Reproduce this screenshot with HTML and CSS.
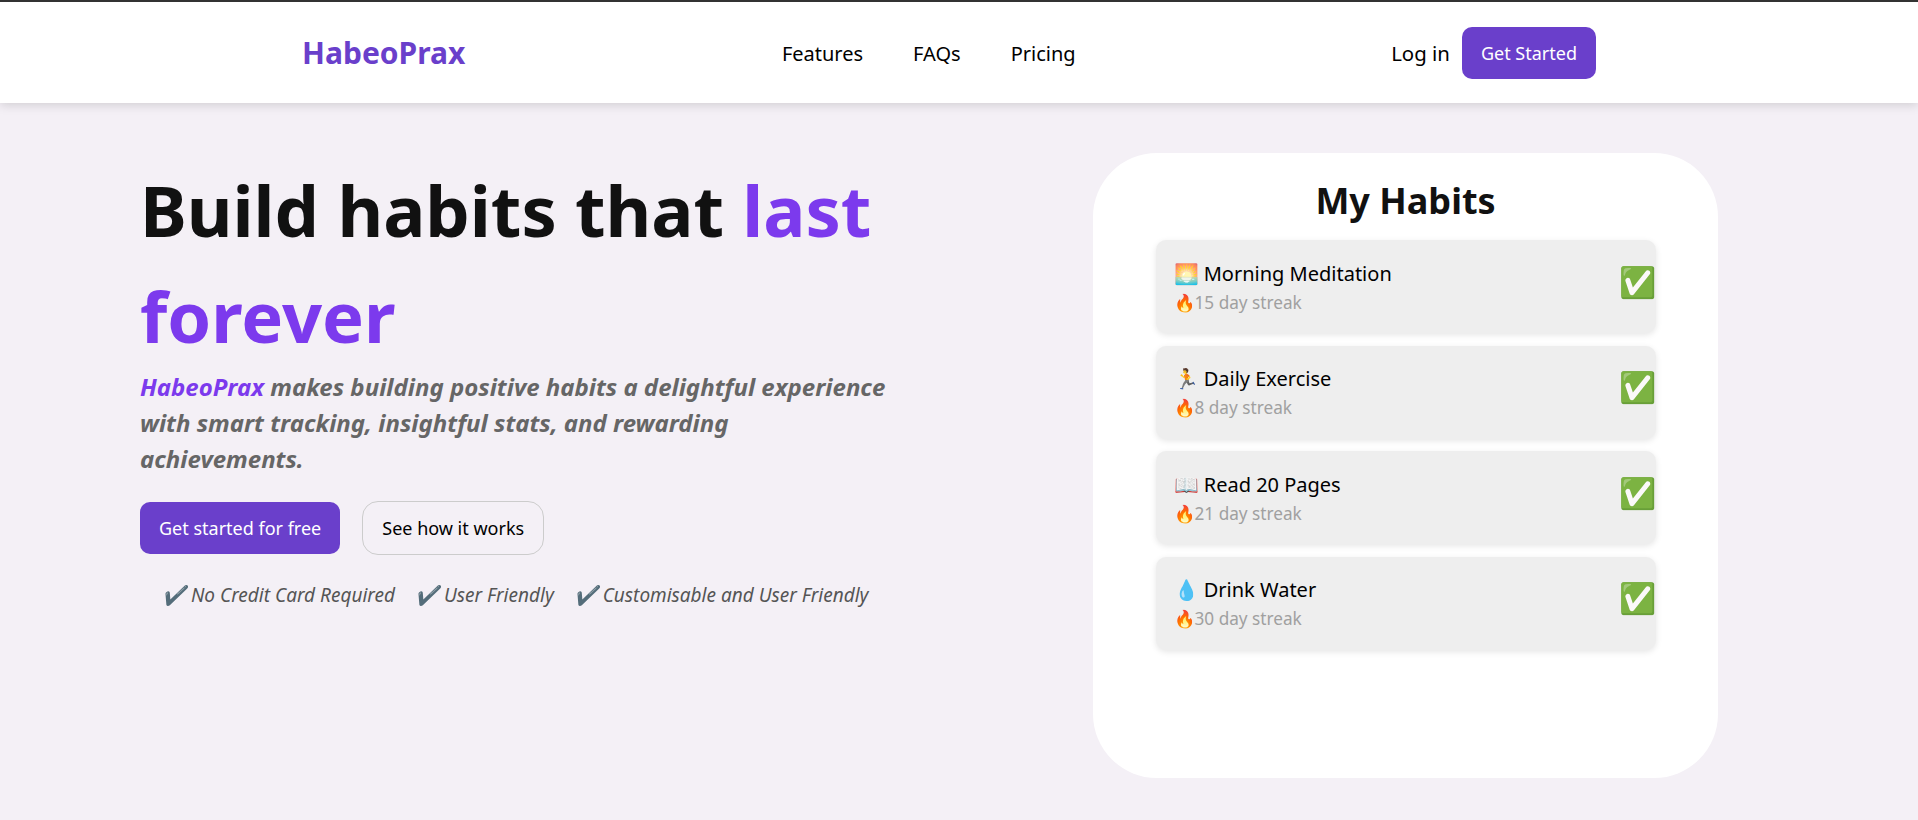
FILE: index.html
```html
<!DOCTYPE html>
<html lang="en">
<head>
    <meta charset="UTF-8">
    <meta name="viewport" content="width=device-width, initial-scale=1.0">
    <title>HabeoPrax</title>
    <link rel="stylesheet" href="styles.css">
</head>
<body>
    <nav class="navbar">
        <div class="logo">HabeoPrax</div>
        <div class="nav-links">
            <a href="#">Features</a>
            <a href="#">FAQs</a>
            <a href="#">Pricing</a>
        </div>
        <div class="nav-actions">
            <a href="#" class="login">Log in</a>
            <button class="btn btn-primary">Get Started</button>
        </div>
    </nav>

    <main class="hero">
        <section class="hero-text">
            <h1>Build habits that <span class="accent">last forever</span></h1>
            <p class="tagline"><span class="accent">HabeoPrax</span> makes building positive habits a delightful experience with smart tracking, insightful stats, and rewarding achievements.</p>
            <div class="hero-buttons">
                <button class="btn btn-primary">Get started for free</button>
                <button class="btn btn-outline">See how it works</button>
            </div>
            <ul class="perks">
                <li>✔️ No Credit Card Required</li>
                <li>✔️ User Friendly</li>
                <li>✔️ Customisable and User Friendly</li>
            </ul>
        </section>

        <section class="habit-card">
            <h2>My Habits</h2>
            <div class="habit">
                <div>
                    <div class="habit-name">🌅 Morning Meditation</div>
                    <div class="habit-streak">🔥15 day streak</div>
                </div>
                <span class="habit-check">✅</span>
            </div>
            <div class="habit">
                <div>
                    <div class="habit-name">🏃 Daily Exercise</div>
                    <div class="habit-streak">🔥8 day streak</div>
                </div>
                <span class="habit-check">✅</span>
            </div>
            <div class="habit">
                <div>
                    <div class="habit-name">📖 Read 20 Pages</div>
                    <div class="habit-streak">🔥21 day streak</div>
                </div>
                <span class="habit-check">✅</span>
            </div>
            <div class="habit">
                <div>
                    <div class="habit-name">💧 Drink Water</div>
                    <div class="habit-streak">🔥30 day streak</div>
                </div>
                <span class="habit-check">✅</span>
            </div>
        </section>
    </main>
</body>
</html>
```

FILE: styles.css
```css
* {
    box-sizing: border-box;
}

body {
    font-family: "Noto Sans", "Open Sans", sans-serif;
    background-color: #f4f0f6;
    margin: 0;
    height: 820px;
    overflow: hidden;
    border-top: 2px solid #333;
}

.navbar {
    height: 101px;
    background-color: #fff;
    box-shadow: 0 2px 10px rgba(0, 0, 0, 0.15);
    display: flex;
    align-items: center;
    padding: 0 322px 0 302px;
    justify-content: space-between;
}

.logo {
    font-size: 30px;
    font-weight: 700;
    color: #6a3fcb;
}

.nav-links {
    display: flex;
    gap: 50px;
    margin-left: 1px;
    padding-top: 2px;
}

.nav-links a,
.login {
    color: #000;
    font-size: 20px;
    text-decoration: none;
}

.login {
    font-size: 20.4px;
}

.nav-actions {
    display: flex;
    align-items: center;
    gap: 12px;
}

.btn {
    font-family: inherit;
    font-size: 18px;
    height: 52px;
    padding: 0 19px;
    border-radius: 10px;
    cursor: pointer;
}

.btn-primary {
    background-color: #6a3fcb;
    color: #fff;
    border: none;
}

.btn-outline {
    height: 54px;
    background-color: transparent;
    color: #000;
    border: 1px solid #ccc;
    border-radius: 16px;
}

.hero {
    display: flex;
    align-items: flex-start;
    padding: 50px 0 0 140px;
}

.hero-text {
    width: 760px;
    margin-right: 193px;
}

h1 {
    font-size: 70.4px;
    font-weight: 700;
    line-height: 106px;
    color: #111;
    margin: 4px 0 0;
}

.accent {
    color: #7c3aed;
}

.tagline {
    font-size: 24px;
    font-weight: 700;
    font-style: italic;
    line-height: 36px;
    color: #666;
    margin: 0;
    width: 750px;
}

.hero-buttons {
    display: flex;
    align-items: center;
    gap: 22px;
    margin-top: 24px;
}

.perks {
    list-style: none;
    display: flex;
    gap: 20px;
    margin: 27px 0 0;
    padding: 0 0 0 22px;
    font-size: 19px;
    font-style: italic;
    color: #555;
    white-space: nowrap;
}

.habit-card {
    width: 625px;
    height: 625px;
    background-color: #fff;
    border-radius: 64px;
    padding-top: 23px;
    display: flex;
    flex-direction: column;
    align-items: center;
}

h2 {
    font-size: 36px;
    font-weight: 700;
    color: #111;
    margin: 0 0 15px;
    line-height: 49px;
}

.habit {
    width: 500px;
    height: 93px;
    flex: none;
    background-color: #eee;
    border-radius: 10px;
    box-shadow: 0 2px 6px rgba(0, 0, 0, 0.1);
    margin-bottom: 12.6px;
    padding-left: 18px;
    display: flex;
    align-items: center;
    justify-content: space-between;
}

.habit-name {
    font-size: 20px;
    color: #000;
}

.habit-streak {
    font-size: 17.2px;
    color: #a0a0a0;
    margin-top: 4px;
}

.habit-check {
    font-size: 30px;
    margin-bottom: 11px;
}
```
